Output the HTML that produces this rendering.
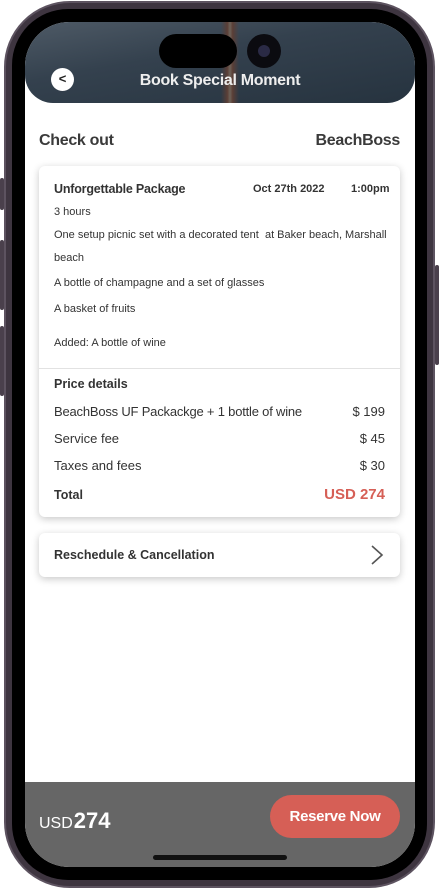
<!DOCTYPE html>
<html><head><style>
*{margin:0;padding:0;box-sizing:border-box}
body{width:439px;height:889px;background:#fff;position:relative;overflow:hidden;font-family:"Liberation Sans",sans-serif;color:#333}
.frame{position:absolute;left:4px;top:1px;width:431px;height:887px;border-radius:66px;background:#3e3540;border:2px solid #5d5360}
.side{position:absolute;width:4px;background:#4a404c;border-radius:2px}
.bezel{position:absolute;left:12px;top:9px;width:415px;height:871px;border-radius:56px;background:#000}
.screen{position:absolute;left:25px;top:22px;width:390px;height:845px;border-radius:44px;background:#fff;overflow:hidden}
.hdr{position:absolute;left:0;top:0;width:390px;height:81px;border-radius:0 0 28px 28px;background:linear-gradient(170deg,#4e5a66 0%,#34414e 40%,#26333f 100%);overflow:hidden}
.bridge{position:absolute;left:196px;top:0;width:18px;height:81px;background:linear-gradient(90deg,transparent,#5a3e36 35%,#6e6258 50%,#5a3e36 65%,transparent)}
.island{position:absolute;left:134px;top:12px;width:78px;height:34px;border-radius:17px;background:#000}
.cam{position:absolute;left:222px;top:12px;width:34px;height:34px;border-radius:50%;background:#0b0b10}
.cam:after{content:"";position:absolute;left:11px;top:11px;width:12px;height:12px;border-radius:50%;background:#2a2a45}
.back{position:absolute;left:26px;top:46px;width:23px;height:23px;border-radius:50%;background:#fff;color:#222;font-size:13px;font-weight:bold;text-align:center;line-height:22px}
.title{position:absolute;left:0;width:390px;top:50px;text-align:center;color:#eee;font-weight:bold;font-size:16px;letter-spacing:-0.3px}
.t{position:absolute;white-space:nowrap}
.card{position:absolute;left:14px;background:#fff;border-radius:6px;box-shadow:0 2px 8px rgba(0,0,0,.22)}
.bot{position:absolute;left:0;top:760px;width:390px;height:85px;background:#666}
.btn{position:absolute;left:245px;top:13px;width:130px;height:43px;border-radius:22px;background:#d65f56;color:#fff;font-weight:bold;font-size:15px;text-align:center;line-height:43px;letter-spacing:-0.3px}
.home{position:absolute;left:128px;top:73px;width:134px;height:5px;border-radius:3px;background:#111}
</style></head><body>
<div class="side" style="left:0;top:178px;height:32px"></div>
<div class="side" style="left:0;top:240px;height:70px"></div>
<div class="side" style="left:0;top:326px;height:70px"></div>
<div class="side" style="left:435px;top:265px;height:100px"></div>
<div class="frame"></div>
<div class="bezel"></div>
<div class="screen">
  <div class="hdr"><div class="bridge"></div><div class="back">&lt;</div><div class="title">Book Special Moment</div></div>
  <div class="island"></div><div class="cam"></div>
  <div class="t" style="left:14px;top:110px;font-size:16px;font-weight:bold;color:#3a3a3a;letter-spacing:-0.3px">Check out</div>
  <div class="t" style="right:15px;top:110px;font-size:16px;font-weight:bold;color:#3a3a3a;letter-spacing:-0.3px">BeachBoss</div>
  <div class="card" style="top:144px;width:361px;height:351px">
    <div class="t" style="left:15px;top:16px;font-size:12.5px;font-weight:bold;letter-spacing:-0.2px">Unforgettable Package</div>
    <div class="t" style="left:214px;top:17px;font-size:11px;font-weight:bold">Oct 27th 2022</div>
    <div class="t" style="left:312px;top:17px;font-size:11px;font-weight:bold">1:00pm</div>
    <div class="t" style="left:15px;top:40px;font-size:11px">3 hours</div>
    <div class="t" style="left:15px;top:63px;font-size:11px">One setup picnic set with a decorated tent &nbsp;at Baker beach, Marshall</div>
    <div class="t" style="left:15px;top:86px;font-size:11px">beach</div>
    <div class="t" style="left:15px;top:111px;font-size:11px">A bottle of champagne and a set of glasses</div>
    <div class="t" style="left:15px;top:137px;font-size:11px">A basket of fruits</div>
    <div class="t" style="left:15px;top:171px;font-size:11px">Added: A bottle of wine</div>
    <div style="position:absolute;left:0;top:202px;width:361px;height:1px;background:#e2e2e2"></div>
    <div class="t" style="left:15px;top:211px;font-size:12.5px;font-weight:bold">Price details</div>
    <div class="t" style="left:15px;top:238px;font-size:13px;letter-spacing:-0.2px">BeachBoss UF Packackge + 1 bottle of wine</div>
    <div class="t" style="right:15px;top:238px;font-size:13px">$ 199</div>
    <div class="t" style="left:15px;top:265px;font-size:13px">Service fee</div>
    <div class="t" style="right:15px;top:265px;font-size:13px">$ 45</div>
    <div class="t" style="left:15px;top:292px;font-size:13px">Taxes and fees</div>
    <div class="t" style="right:15px;top:292px;font-size:13px">$ 30</div>
    <div class="t" style="left:15px;top:322px;font-size:12.5px;font-weight:bold">Total</div>
    <div class="t" style="right:15px;top:320px;font-size:15px;font-weight:bold;color:#d65f56">USD 274</div>
  </div>
  <div class="card" style="top:511px;width:361px;height:44px">
    <div class="t" style="left:15px;top:15px;font-size:12.5px;font-weight:bold">Reschedule &amp; Cancellation</div>
    <svg style="position:absolute;left:331px;top:12px" width="14" height="20" viewBox="0 0 14 20"><path d="M2 1 L12 10 L2 19" fill="none" stroke="#555" stroke-width="1.6"/></svg>
  </div>
  <div class="bot">
    <div class="t" style="left:14px;top:26px;color:#fff;font-size:16px">USD<b style="font-size:22px;margin-left:1px">274</b></div>
    <div class="btn">Reserve Now</div>
    <div class="home"></div>
  </div>
</div>
</body></html>
